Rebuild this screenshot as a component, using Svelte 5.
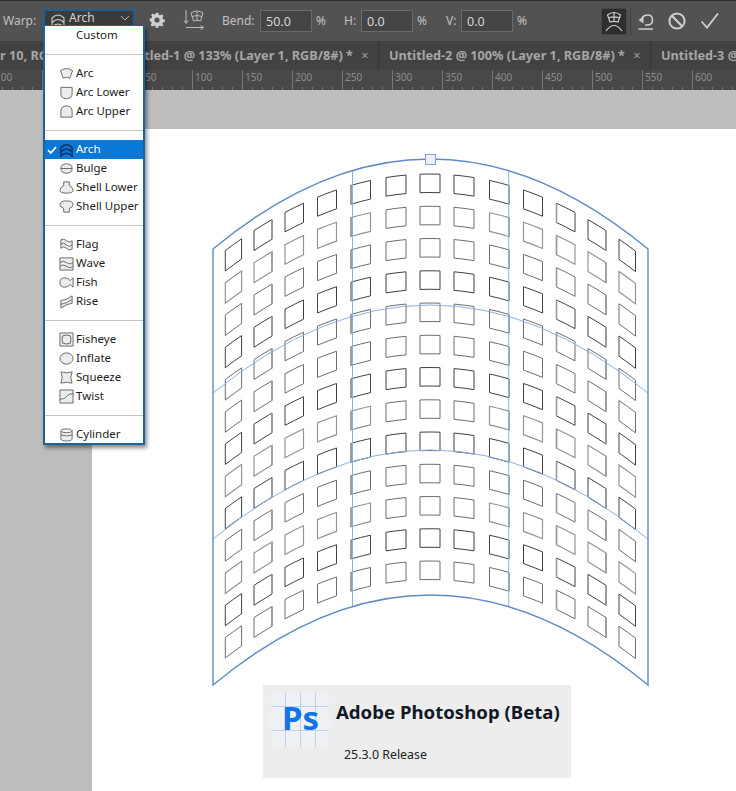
<script>
  // warp cage: x stays put, y follows a parabola around the centre line
  const colX = [
    [225.3, 241.6], [254, 272], [285, 303.5], [317.5, 336.5], [351, 370.5], [386, 406], [420, 440],
    [454, 474], [489.5, 509], [523.5, 542.5], [556.5, 575], [588, 606], [619, 635.5]
  ];
  const rowShade = [0, 2, 1, 0, 1, 1, 0, 2, 0, 1, 2, 0, 1];
  const shades = ['#2b2b2b', '#5e5e5e', '#929292'];
  const greySides = { 1: 1, 4: 1, 6: 0, 8: 1, 10: 1, 11: 1 };

  const sag = (x) => 86 * ((x - 430) / 217) ** 2;
  const grow = (x) => 2.2 * ((x - 430) / 217) ** 2;

  function cellPath(x0, x1, j) {
    const base = 174 + 32.25 * j;
    const xm = (x0 + x1) / 2;
    const t0 = base + sag(x0);
    const t1 = base + sag(x1);
    const tc = 2 * (base + sag(xm)) - (t0 + t1) / 2;
    const h0 = 18.5 + grow(x0);
    const h1 = 18.5 + grow(x1);
    const hc = 18.5 + grow(xm);
    return `M${x0} ${t0} Q${xm} ${tc} ${x1} ${t1} V${t1 + h1} Q${xm} ${tc + hc} ${x0} ${t0 + h0} Z`;
  }

  const cells = [];
  colX.forEach(([x0, x1], i) => {
    rowShade.forEach((s, j) => {
      // the middle columns read darker than the outer ones
      const shade = Math.abs(i - 6) < 2 && s === 2 ? 1 : s;
      cells.push({ d: cellPath(x0, x1, j), color: shades[shade], width: shade === 2 ? 1.15 : 0.9 });
    });
  });

  const sideLines = [];
  colX.forEach(([x0, x1], i) => {
    if (!greySides[i]) return;
    rowShade.forEach((_, j) => {
      const x = i < 6 ? (i === 1 ? x1 : x0) : (i === 10 ? x0 : x1);
      const top = 174 + 32.25 * j + sag(x);
      sideLines.push(`M${x} ${top}V${top + 18.5 + grow(x)}`);
    });
  });

  const icons = {
    arc: 'M1.5 5Q8 .5 14.5 5L11.5 13Q8 11 4.5 13Z',
    arcLower: 'M2 2.5H14V9Q14 14.5 8 14.5Q2 14.5 2 9Z',
    arcUpper: 'M2 14V8Q2 2 8 2Q14 2 14 8V14Z',
    arch: 'M2 6Q8 0 14 6V15Q8 9 2 15ZM2 10.500Q8 4.500 14 10.500',
    bulge: 'M2 8Q2 3 8 3Q14 3 14 8Q14 13 8 13Q2 13 2 8ZM2 8H14',
    shellLower: 'M5 2H11V6Q15 8 15 11Q15 14 8 14Q1 14 1 11Q1 8 5 6Z',
    shellUpper: 'M8 2Q15 2 15 6Q15 9 11 10V14H5V10Q1 9 1 6Q1 2 8 2Z',
    flag: 'M2 3Q5 1 8 4T14 4V13Q11 15 8 12T2 12ZM2 7.5Q5 5.5 8 8.5T14 8.5',
    wave: 'M1 2H15V15H1ZM1 7Q4 4 8 7T15 7M1 11Q4 8 8 11T15 11',
    fish: 'M1 8Q1 3 6 3Q10 3 12 6L15 3V13L12 10Q10 13 6 13Q1 13 1 8Z',
    rise: 'M2 7Q7 7 14 2V10Q9 10 2 15ZM2 11Q8 10 14 6',
    fisheye: 'M1 1H15V15H1ZM4 4Q8 2.5 12 4Q13.5 8 12 12Q8 13.5 4 12Q2.5 8 4 4Z',
    inflate: 'M1 8a7 6 0 1 0 14 0a7 6 0 1 0-14 0Z',
    squeeze: 'M2 2Q8 4 14 2Q11 8 14 14Q8 12 2 14Q5 8 2 2Z',
    twist: 'M1 1H15V15H1ZM1 11Q6 11 8 8T15 5',
    cylinder: 'M2 4Q2 2 8 2Q14 2 14 4V13Q14 15 8 15Q2 15 2 13ZM2 4Q2 6 8 6Q14 6 14 4M2 8.5Q8 10.5 14 8.5'
  };

  const groups = [
    [['Arc', 'arc'], ['Arc Lower', 'arcLower'], ['Arc Upper', 'arcUpper']],
    [['Arch', 'arch', true], ['Bulge', 'bulge'], ['Shell Lower', 'shellLower'], ['Shell Upper', 'shellUpper']],
    [['Flag', 'flag'], ['Wave', 'wave'], ['Fish', 'fish'], ['Rise', 'rise']],
    [['Fisheye', 'fisheye'], ['Inflate', 'inflate'], ['Squeeze', 'squeeze'], ['Twist', 'twist']],
    [['Cylinder', 'cylinder']]
  ];

  const rulerMarks = ['100', '50', '0', '50', '100', '150', '200', '250', '300', '350', '400', '450', '500', '550', '600'];
</script>

<div class="app">
  <div class="toolbar">
    <span class="label warp-label">Warp:</span>
    <div class="select">
      <svg class="sel-icon" viewBox="0 0 16 16" width="16" height="16"><path d={icons.arch} /></svg>
      <span class="sel-text">Arch</span>
      <svg class="chev" viewBox="0 0 10 6" width="10" height="6"><path d="M1 1L5 5L9 1" /></svg>
    </div>
    <svg class="gear" viewBox="0 0 18 18" width="18" height="18">
      <path d="M7.5 1h3l.4 2.3 1.6.7 2-1.3 2 2-1.3 2 .7 1.6 2.1.4v3l-2.1.4-.7 1.6 1.3 2-2 1.3-2-1.3-1.6.7-.4 2h-3l-.4-2-1.6-.7-2 1.3-2-2 1.3-2-.7-1.6L.5 10.600v-3l2.100-.4.7-1.600-1.300-2 2-2 2 1.300 1.600-.7z" transform="translate(1.300 0) scale(.86)" />
      <circle cx="9" cy="8" r="2.600" fill="#525252" />
    </svg>
    <svg class="orient" viewBox="0 0 22 22" width="22" height="22">
      <path d="M3 1V14M1 11.500L3 14.500L5 11.500M3 18.500H20M17.500 16.500L20.500 18.500L17.500 20.500" />
      <path d="M8 4Q14 0 20 4L17.500 12Q14 10.500 10.500 12ZM14 2.500V11M9 7.500Q14 5.500 19 7.500" />
    </svg>
    <span class="label bend-label">Bend:</span>
    <div class="num">50.0</div>
    <span class="label pct">%</span>
    <span class="label h-label">H:</span>
    <div class="num">0.0</div>
    <span class="label pct">%</span>
    <span class="label v-label">V:</span>
    <div class="num">0.0</div>
    <span class="label pct">%</span>
    <div class="toggle">
      <svg viewBox="0 0 20 24" width="20" height="24">
        <path d="M3.500 6Q10 1 16.500 6L14 13Q10 11.800 6 13ZM10 3.500V12.500M5 8.800Q10 7 15 8.800" />
        <path d="M2 22Q10 11 18 22" />
      </svg>
    </div>
    <div class="divider"></div>
    <svg class="undo" viewBox="0 0 18 18" width="18" height="18">
      <path d="M5 6Q7 3 10.500 3Q15.500 3 15.500 8Q15.500 13 10 13H8" />
      <path d="M1.500 8L6.500 4.500V11.500Z" class="solid" />
      <path d="M1.500 17H16" />
    </svg>
    <svg class="cancel" viewBox="0 0 20 20" width="20" height="20">
      <circle cx="10" cy="10" r="7.600" />
      <path d="M4.800 4.800L15.200 15.200" />
    </svg>
    <svg class="check" viewBox="0 0 20 18" width="20" height="18"><path d="M1.500 9.500L7 15.500L18 1.500" /></svg>
  </div>

  <div class="tabs">
    <div class="tab tab-first">r 10, RGB/8#) *</div>
    <div class="tab">Untitled-1 @ 133% (Layer 1, RGB/8#) * <span class="x">×</span></div>
    <div class="tab">Untitled-2 @ 100% (Layer 1, RGB/8#) * <span class="x">×</span></div>
    <div class="tab">Untitled-3 @ 100% (Layer 1, RGB/8#) * <span class="x">×</span></div>
  </div>

  <div class="ruler">
    {#each rulerMarks as mark}
      <div class="mark">{mark}</div>
    {/each}
  </div>

  <div class="stage">
    <div class="doc">
      <svg class="warp" viewBox="92 129 644 556" width="644" height="556">
        {#each cells as c}
          <path d={c.d} fill="none" stroke={c.color} stroke-width={c.width} />
        {/each}
        <path d={sideLines.join('')} fill="none" stroke="#9a9a9a" stroke-width="1.600" />
        <path class="grid" d="M213 393Q430 217 648 393M213 539Q430 361 648 539M352.500 170.600V606.600M508.700 170.600V606.600" />
        <path class="cage" d="M213 249Q430 69 648 249V685Q430 505 213 685Z" />
        <rect class="handle" x="425.500" y="154.500" width="10" height="10" />
      </svg>
      <div class="about">
        <div class="ps-logo">
          <i class="v v1"></i><i class="v v2"></i><i class="v v3"></i>
          <i class="h h1"></i><i class="h h2"></i>
          <span class="ps">Ps</span>
        </div>
        <div class="about-text">
          <div class="title">Adobe Photoshop (Beta)</div>
          <div class="version">25.3.0 Release</div>
        </div>
      </div>
    </div>
  </div>

  <div class="menu">
    <div class="item"><span class="item-text">Custom</span></div>
    {#each groups as group}
      <div class="sep"></div>
      <div class="group">
        {#each group as [name, icon, selected]}
          <div class="item" class:selected>
            {#if selected}
              <svg class="tick" viewBox="0 0 10 8" width="10" height="8"><path d="M1 4L3.800 7L9 1" /></svg>
            {/if}
            <svg class="item-icon" viewBox="0 0 16 16" width="15" height="15"><path d={icons[icon]} /></svg>
            <span class="item-text">{name}</span>
          </div>
        {/each}
      </div>
    {/each}
  </div>
</div>

<style>
  :global(body) {
    background: #bdbdbd;
  }

  .app {
    position: relative;
    width: 736px;
    height: 791px;
    overflow: hidden;
    display: flex;
    flex-direction: column;
    font-family: "Noto Sans", "Open Sans", sans-serif;
  }

  .toolbar {
    flex: none;
    height: 40px;
    display: flex;
    align-items: center;
    background: #525252;
    border-top: 1px solid #2f2f2f;
    color: #c4c4c4;
    font-size: 12px;
  }

  .label {
    flex: none;
    color: #c0c0c0;
    line-height: 1;
  }

  .warp-label {
    margin-left: 3px;
    width: 40px;
  }

  .select {
    flex: none;
    width: 88px;
    height: 16px;
    margin-top: -6px;
    display: flex;
    align-items: center;
    background: #3b3b3b;
    border: 2px solid #1c5f94;
    border-bottom: none;
    border-radius: 2px 2px 0 0;
    color: #d4d4d4;
  }

  .sel-icon {
    flex: none;
    margin-left: 5px;
    margin-top: 1px;
    fill: none;
    stroke: #d0d0d0;
    stroke-width: 1.100;
  }

  .sel-text {
    margin-left: 3px;
    margin-top: -3px;
    flex: 1;
  }

  .chev {
    flex: none;
    margin-right: 3px;
    margin-top: -2px;
    fill: none;
    stroke: #b0b0b0;
  }

  .gear {
    flex: none;
    margin-left: 13px;
    fill: #d0d0d0;
  }

  .orient {
    flex: none;
    margin-left: 17px;
    margin-top: -2px;
    fill: none;
    stroke: #bcbcbc;
    stroke-width: 1;
  }

  .bend-label {
    margin-left: 17px;
    width: 38px;
  }

  .num {
    flex: none;
    box-sizing: border-box;
    width: 52px;
    height: 22px;
    padding-left: 5px;
    font-size: 12.500px;
    line-height: 21px;
    background: #454545;
    border: 1px solid #6a6a6a;
    color: #d6d6d6;
  }

  .pct {
    width: 12px;
    margin-left: 4px;
  }

  .h-label {
    margin-left: 16px;
    width: 17px;
  }

  .v-label {
    margin-left: 17px;
    width: 15px;
  }

  .toggle {
    flex: none;
    box-sizing: border-box;
    margin-left: 72px;
    width: 26px;
    height: 27px;
    display: flex;
    align-items: center;
    justify-content: center;
    background: #2e2e2e;
    border: 1px solid #474747;
    border-radius: 2px;
  }

  .toggle svg {
    fill: none;
    stroke: #d0d0d0;
    stroke-width: 1.200;
  }

  .divider {
    flex: none;
    width: 1px;
    height: 29px;
    margin-left: 3px;
    background: #3f3f3f;
  }

  .undo {
    flex: none;
    margin-left: 6px;
    fill: none;
    stroke: #cfcfcf;
    stroke-width: 1.500;
  }

  .undo .solid {
    fill: #cfcfcf;
    stroke: none;
  }

  .cancel {
    flex: none;
    margin-left: 12px;
    fill: none;
    stroke: #cfcfcf;
    stroke-width: 2;
  }

  .check {
    flex: none;
    margin-left: 13px;
    fill: none;
    stroke: #cfcfcf;
    stroke-width: 1.800;
  }

  .tabs {
    flex: none;
    height: 29px;
    display: flex;
    background: #424242;
    color: #a6a6a6;
    font-size: 12.700px;
    font-weight: 700;
    line-height: 29px;
    white-space: nowrap;
  }

  .tab {
    flex: none;
    box-sizing: border-box;
    width: 272px;
    padding-left: 10px;
    border-right: 1px solid #353535;
    overflow: hidden;
  }

  .tab-first {
    width: 107px;
    padding-left: 0;
  }

  .x {
    margin-left: 5px;
    font-weight: 400;
    color: #9a9a9a;
  }

  .ruler {
    flex: none;
    height: 20px;
    display: flex;
    margin-left: -8px;
    background-color: #484848;
    background-image: repeating-linear-gradient(to right, #777 0 1px, transparent 1px 10px);
    background-size: 100% 3px;
    background-repeat: no-repeat;
    background-position: 0 100%;
    color: #8d8d8d;
    font-size: 10px;
    line-height: 15px;
  }

  .mark {
    flex: none;
    box-sizing: border-box;
    width: 50px;
    padding-left: 2px;
    border-left: 1px solid #777;
  }

  .stage {
    flex: 1;
    padding: 39px 0 0 92px;
    background: #bdbdbd;
  }

  .doc {
    height: 100%;
    background: #fff;
  }

  .warp {
    display: block;
    overflow: visible;
  }

  .grid {
    fill: none;
    stroke: #8cafdd;
    stroke-width: 1;
  }

  .cage {
    fill: none;
    stroke: #5f8ac6;
    stroke-width: 1.400;
  }

  .handle {
    fill: #eef1f4;
    stroke: #7fa5d6;
  }

  .about {
    box-sizing: border-box;
    width: 308px;
    height: 93px;
    margin-left: 171px;
    padding: 7px 0 0 8px;
    display: flex;
    background: #ededed;
  }

  .ps-logo {
    position: relative;
    flex: none;
    width: 58px;
    height: 55px;
    background: #eff1f4;
    border-radius: 8px;
  }

  .v, .h {
    position: absolute;
    background: #bdd0ec;
  }

  .v {
    top: 0;
    bottom: 0;
    width: 1px;
  }

  .h {
    left: 0;
    right: 0;
    height: 1px;
  }

  .v1 { left: 14px; }
  .v2 { left: 29px; }
  .v3 { left: 44px; }
  .h1 { top: 14px; }
  .h2 { top: 38px; }

  .ps {
    position: absolute;
    left: 11px;
    top: 3px;
    font-size: 33px;
    font-weight: 700;
    line-height: 45px;
    color: #1473e6;
  }

  .about-text {
    margin-left: 7px;
  }

  .title {
    margin-top: 6px;
    font-size: 18.600px;
    font-weight: 700;
    line-height: 28px;
    color: #111827;
    white-space: nowrap;
  }

  .version {
    margin: 21px 0 0 8px;
    font-size: 12.400px;
    line-height: 16px;
    color: #222;
  }

  .menu {
    position: absolute;
    left: 43px;
    top: 25px;
    box-sizing: border-box;
    width: 102px;
    height: 420px;
    background: #fff;
    border: 2px solid #17659c;
    border-width: 1px 2px 2px 2px;
    box-shadow: 2px 3px 4px rgba(0, 0, 0, .45);
    color: #1c1c1c;
    font-size: 11.500px;
  }

  .sep {
    height: 1px;
    background: #c4c4c4;
    margin-top: 9px;
  }

  .group {
    margin-top: 9px;
  }

  .item {
    position: relative;
    height: 19px;
    padding-left: 31px;
    line-height: 18px;
    white-space: nowrap;
  }

  .item.selected {
    background: #0a78d7;
    color: #fff;
  }

  .item-icon {
    position: absolute;
    left: 14px;
    top: 2px;
    fill: #ececec;
    stroke: #555;
    stroke-width: .900;
  }

  .selected .item-icon {
    fill: none;
    stroke: #0b2f66;
    stroke-width: 1.600;
  }

  .tick {
    position: absolute;
    left: 2px;
    top: 6px;
    fill: none;
    stroke: #fff;
    stroke-width: 1.800;
  }
</style>
